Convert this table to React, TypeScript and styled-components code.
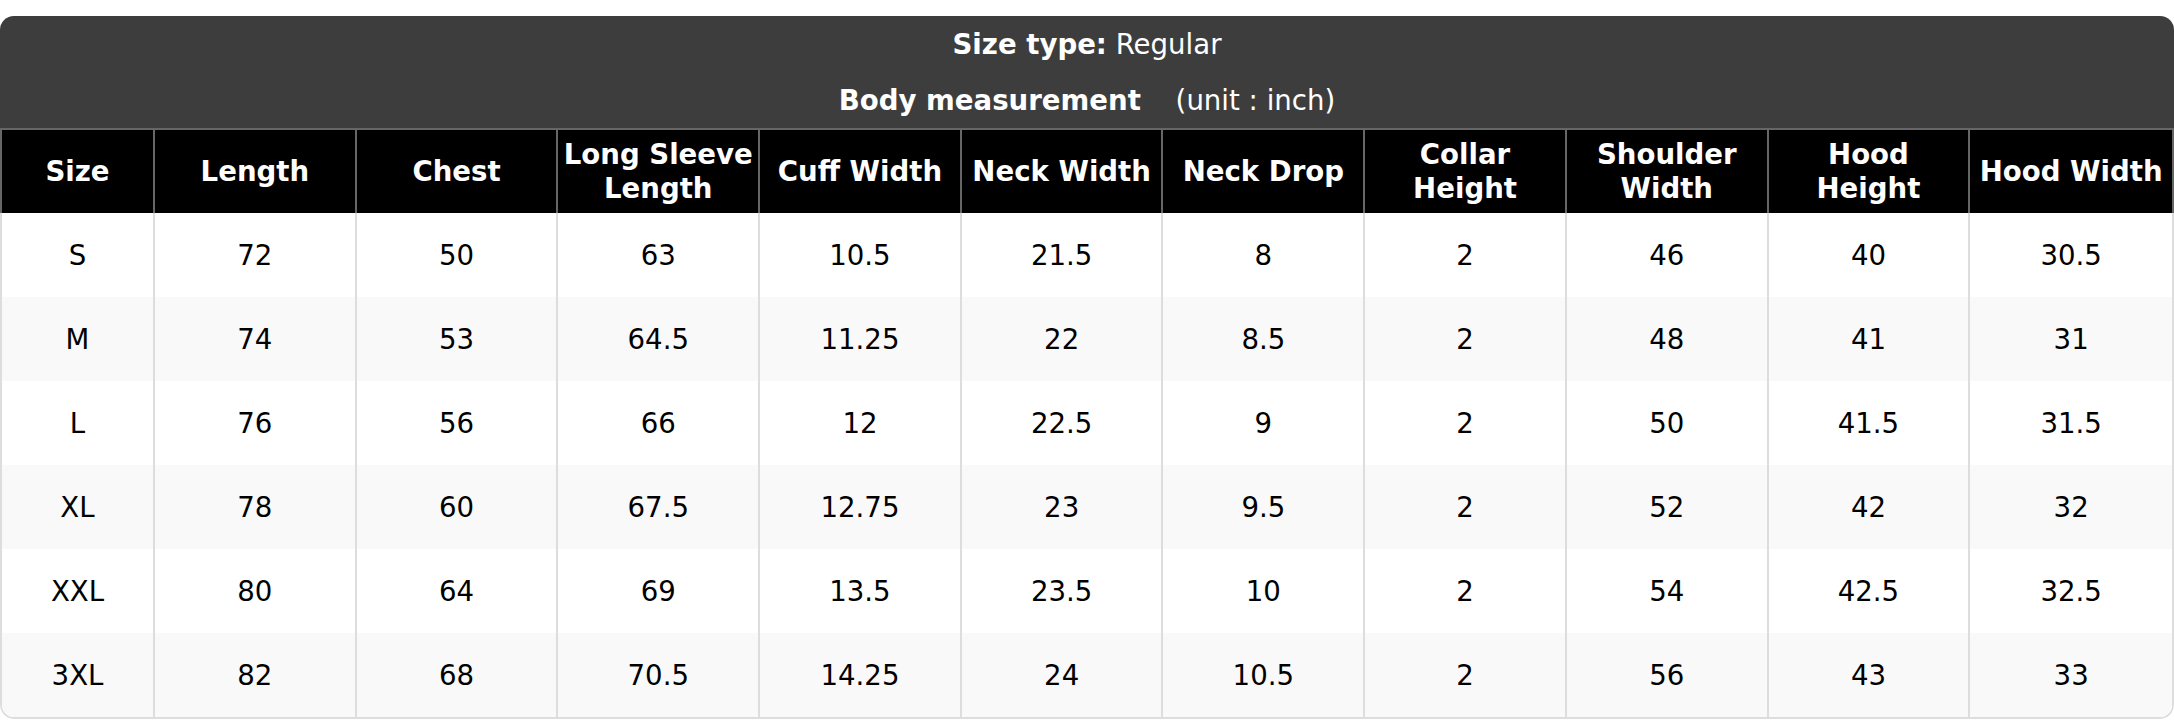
import React from "react";
import styled, { createGlobalStyle } from "styled-components";

const Global = createGlobalStyle`
  html, body { margin: 0; padding: 0; background: #fff; }
  body { font-family: "DejaVu Sans", Verdana, sans-serif; }
  * { box-sizing: border-box; }
`;

const Page = styled.div`
  padding-top: 16px;
`;

const Card = styled.div`
  width: 2174px;
  border-radius: 14px;
  overflow: hidden;
  background: #fff;
`;

const TitleBar = styled.div`
  background: #3d3d3d;
  color: #fff;
  display: flex;
  flex-direction: column;
`;

const TitleLine = styled.div`
  height: 56px;
  display: flex;
  align-items: center;
  justify-content: center;
  font-size: 27.6px;
  white-space: pre;
`;

const Strong = styled.span`
  font-weight: bold;
`;

const Unit = styled.span`
  margin-left: 26px;
`;

const columns = "153px repeat(10, 1fr)";

const HeadRow = styled.div`
  display: grid;
  grid-template-columns: ${columns};
  background: #000;
  border-top: 2px solid #666;
  border-left: 2px solid #666;
  border-right: 2px solid #666;
  height: 85px;
`;

const HeadCell = styled.div<{ $last?: boolean }>`
  display: flex;
  align-items: center;
  justify-content: center;
  text-align: center;
  color: #fff;
  font-weight: bold;
  font-size: 27.6px;
  line-height: 1.2;
  padding: 0 5px;
  border-right: ${(p) => (p.$last ? "none" : "2px solid #666")};
`;

const Body = styled.div`
  border: 2px solid #ddd;
  border-top: none;
  border-radius: 0 0 14px 14px;
  overflow: hidden;
`;

const Row = styled.div<{ $alt: boolean }>`
  display: grid;
  grid-template-columns: ${columns};
  height: 84px;
  background: ${(p) => (p.$alt ? "#f9f9f9" : "#fff")};
`;

const Cell = styled.div<{ $last?: boolean }>`
  display: flex;
  align-items: center;
  justify-content: center;
  color: #000;
  font-size: 27.6px;
  border-right: ${(p) => (p.$last ? "none" : "2px solid #ddd")};
`;

const headers = [
  "Size",
  "Length",
  "Chest",
  "Long Sleeve Length",
  "Cuff Width",
  "Neck Width",
  "Neck Drop",
  "Collar Height",
  "Shoulder Width",
  "Hood Height",
  "Hood Width",
];

const rows = [
  ["S", "72", "50", "63", "10.5", "21.5", "8", "2", "46", "40", "30.5"],
  ["M", "74", "53", "64.5", "11.25", "22", "8.5", "2", "48", "41", "31"],
  ["L", "76", "56", "66", "12", "22.5", "9", "2", "50", "41.5", "31.5"],
  ["XL", "78", "60", "67.5", "12.75", "23", "9.5", "2", "52", "42", "32"],
  ["XXL", "80", "64", "69", "13.5", "23.5", "10", "2", "54", "42.5", "32.5"],
  ["3XL", "82", "68", "70.5", "14.25", "24", "10.5", "2", "56", "43", "33"],
];

export default function App() {
  return (
    <Page>
      <Global />
      <Card>
        <TitleBar>
          <TitleLine>
            <Strong>Size type:</Strong> Regular
          </TitleLine>
          <TitleLine>
            <Strong>Body measurement</Strong>
            <Unit> (unit : inch)</Unit>
          </TitleLine>
        </TitleBar>
        <HeadRow>
          {headers.map((h, i) => (
            <HeadCell key={h} $last={i === headers.length - 1}>
              {h}
            </HeadCell>
          ))}
        </HeadRow>
        <Body>
          {rows.map((r, ri) => (
            <Row key={r[0]} $alt={ri % 2 === 1}>
              {r.map((v, ci) => (
                <Cell key={ci} $last={ci === r.length - 1}>
                  {v}
                </Cell>
              ))}
            </Row>
          ))}
        </Body>
      </Card>
    </Page>
  );
}
